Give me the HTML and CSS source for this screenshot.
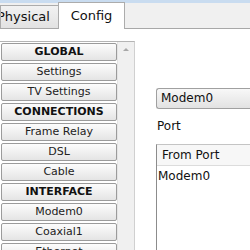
FILE: index.html
```html
<!DOCTYPE html>
<html lang="en">
<head>
    <meta charset="UTF-8">
    <title>Config</title>
    <link rel="stylesheet" href="styles.css">
</head>
<body>

    <div class="topline"></div>

    <div class="tabs">
        <div class="tab">Physical</div>
        <div class="tab active">Config</div>
    </div>

    <div class="main">
        <div class="side">
            <div class="side-list">
                <div class="item head">GLOBAL</div>
                <div class="item">Settings</div>
                <div class="item">TV Settings</div>
                <div class="item head">CONNECTIONS</div>
                <div class="item">Frame Relay</div>
                <div class="item">DSL</div>
                <div class="item">Cable</div>
                <div class="item head">INTERFACE</div>
                <div class="item">Modem0</div>
                <div class="item">Coaxial1</div>
                <div class="item">Ethernet</div>
            </div>
            <div class="scrollbar">
                <span class="arrow"></span>
            </div>
        </div>

        <div class="content">
            <div class="select">Modem0</div>
            <div class="label">Port</div>
            <div class="port-table">
                <div class="port-head">From Port</div>
                <div class="port-row">Modem0</div>
            </div>
        </div>
    </div>

</body>
</html>
```

FILE: styles.css
```css
body {
    font-family: "DejaVu Sans", Verdana, sans-serif;
    margin: 0;
    padding: 0;
    width: 250px;
    height: 250px;
    overflow: hidden;
    background-color: #fff;
    color: #111;
}

.topline {
    height: 3px;
    background-color: #c9dcf0;
}

/* Tab strip */
.tabs {
    display: flex;
    align-items: flex-end;
    height: 25px;
    background-color: #f0f0f0;
    border-bottom: 1px solid #a8a8a8;
}

.tab {
    height: 23px;
    line-height: 22px;
    font-size: 13px;
    box-sizing: border-box;
    border: 1px solid #acacac;
    border-bottom: none;
    background: linear-gradient(#f2f2f2, #e2e2e2);
    width: 59px;
    text-indent: -4px;
    overflow: hidden;
    white-space: nowrap;
}

.tab.active {
    height: 27px;
    line-height: 25px;
    width: 67px;
    text-indent: 0;
    text-align: center;
    background: #fff;
    margin-left: -1px;
    margin-bottom: -1px;
}

.main {
    display: flex;
    padding-top: 12px;
}

/* Left button list */
.side {
    display: flex;
    width: 135px;
    height: 209px;
    overflow: hidden;
    box-sizing: border-box;
    border-top: 1px solid #b4b4b4;
    border-right: 1px solid #d0d0d0;
}

.side-list {
    width: 117px;
    padding-top: 1px;
}

.item {
    height: 18px;
    box-sizing: border-box;
    margin: 0 0 2px 1px;
    border: 1px solid #9b9b9b;
    border-radius: 2px;
    background: linear-gradient(#fcfcfc, #e4e4e4);
    font-size: 11px;
    line-height: 16px;
    text-align: center;
    color: #222;
}

.item.head {
    font-weight: bold;
    color: #111;
}

.scrollbar {
    flex: 1;
    background-color: #f0f0f0;
    border-left: 1px solid #e4e4e4;
    display: flex;
    justify-content: center;
    padding-top: 6px;
}

.arrow {
    width: 0;
    height: 0;
    border-left: 3px solid transparent;
    border-right: 3px solid transparent;
    border-bottom: 3px solid #a8a8a8;
}

/* Right side */
.content {
    padding-left: 21px;
    padding-top: 47px;
    flex: 1;
    height: 209px;
    box-sizing: border-box;
    overflow: hidden;
}

.select {
    height: 21px;
    box-sizing: border-box;
    border: 1px solid #a0a0a0;
    border-right: none;
    border-radius: 3px 0 0 3px;
    background: linear-gradient(#f8f8f8, #e2e2e2);
    font-size: 12px;
    line-height: 19px;
    padding-left: 4px;
}

.label {
    font-size: 12px;
    margin-top: 10px;
    padding-left: 1px;
    height: 19px;
}

.port-table {
    margin-top: 6px;
    height: 120px;
    border-top: 1px solid #c4c4c4;
    border-left: 1px solid #8c8c8c;
}

.port-head {
    height: 20px;
    line-height: 20px;
    font-size: 12px;
    padding-left: 5px;
    background-color: #f7f7f7;
    border-bottom: 1px solid #dcdcdc;
}

.port-row {
    font-size: 12px;
    line-height: 20px;
    padding-left: 1px;
}
```
